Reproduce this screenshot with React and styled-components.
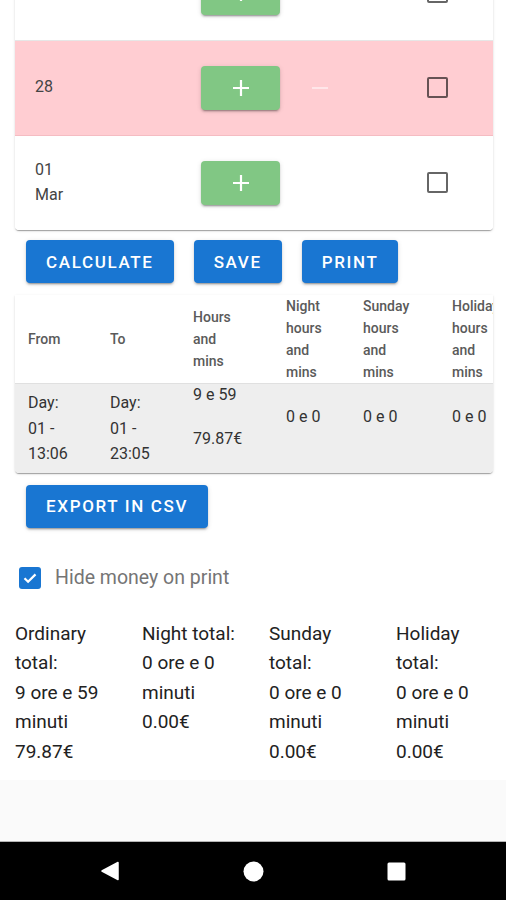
import React from "react";
import styled, { createGlobalStyle } from "styled-components";

const Global = createGlobalStyle`
  html, body { margin: 0; padding: 0; background: #fff; }
  body { font-family: Roboto, "Noto Sans", "Liberation Sans", sans-serif; color: #212121; }
  * { box-sizing: border-box; }
`;

const Screen = styled.div`
  width: 506px;
  height: 900px;
  display: flex;
  flex-direction: column;
  overflow: hidden;
`;

const Viewport = styled.div`
  flex: 1;
  display: flex;
  flex-direction: column;
  overflow: hidden;
`;

const Scrolled = styled.div`
  margin-top: -54px;
  display: flex;
  flex-direction: column;
`;

const Card = styled.div`
  margin: 0 13px 0 15px;
  background: #fff;
  border-radius: 0 0 4px 4px;
  box-shadow: 0 2px 1px -1px rgba(0,0,0,0.2), 0 1px 1px 0 rgba(0,0,0,0.14), 0 1px 3px 0 rgba(0,0,0,0.12);
  overflow: hidden;
`;

const DayRow = styled.div`
  height: ${p => (p.$last ? 94 : 95)}px;
  display: grid;
  grid-template-columns: 166px 79px 1fr 21px;
  align-items: center;
  padding: 0 45px 0 20px;
  background: ${p => (p.$holiday ? "#ffcdd2" : "#fff")};
  border-bottom: ${p => (p.$last ? "none" : p.$holiday ? "1px solid #f5bcc2" : "1px solid #e6e6e6")};
`;

const DayLabel = styled.div`
  font-size: 16px;
  line-height: 25px;
  color: #444;
  margin-top: -3px;
`;

const AddButton = styled.div`
  width: 79px;
  height: 44px;
  border-radius: 4px;
  background: #81c784;
  display: flex;
  align-items: center;
  justify-content: center;
  box-shadow: 0 3px 1px -2px rgba(0,0,0,0.2), 0 2px 2px 0 rgba(0,0,0,0.14), 0 1px 5px 0 rgba(0,0,0,0.12);
`;

const MinusCell = styled.div`
  padding-left: 32px;
  display: flex;
  align-items: center;
`;

const Minus = styled.span`
  display: block;
  width: 16px;
  height: 2px;
  background: rgba(255,255,255,0.5);
`;

const Box = styled.div`
  width: 21px;
  height: 21px;
  margin-top: -2px;
  border-radius: 2px;
  border: 2px solid rgba(0,0,0,0.6);
`;

const ButtonRow = styled.div`
  display: flex;
  gap: 20px;
  padding-left: 26px;
  margin-top: ${p => p.$top}px;
`;

const BlueButton = styled.div`
  height: 43px;
  padding: 0 20px;
  display: flex;
  align-items: center;
  background: #1976d2;
  color: #fff;
  border-radius: 4px;
  font-size: 17px;
  font-weight: 500;
  letter-spacing: 1.65px;
  text-transform: uppercase;
  box-shadow: 0 3px 1px -2px rgba(0,0,0,0.2), 0 2px 2px 0 rgba(0,0,0,0.14), 0 1px 5px 0 rgba(0,0,0,0.12);
`;

const TableWrap = styled.div`
  margin: 12px 13px 0 15px;
  overflow: hidden;
  border-radius: 0 0 4px 4px;
  box-shadow: 0 2px 1px -1px rgba(0,0,0,0.2), 0 1px 1px 0 rgba(0,0,0,0.14), 0 1px 3px 0 rgba(0,0,0,0.12);
`;

const Table = styled.table`
  border-collapse: collapse;
  table-layout: fixed;
  width: 530px;
`;

const Th = styled.th`
  width: ${p => p.$w}px;
  height: 88px;
  padding: 0 0 0 13px;
  text-align: left;
  vertical-align: middle;
  font-size: 14px;
  font-weight: 500;
  line-height: 22px;
  color: #5a5a5a;
  background: #fff;
  border-bottom: 1px solid #e0e0e0;
`;

const Td = styled.td`
  height: 89px;
  padding: 0 0 0 13px;
  vertical-align: middle;
  font-size: 16px;
  line-height: ${p => p.$lh || 22}px;
  color: #333;
  background: #eeeeee;
  white-space: nowrap;
`;

const Line = styled.div`
  min-height: 22px;
`;

const CheckRow = styled.label`
  display: flex;
  align-items: center;
  gap: 14px;
  margin-top: 30px;
  padding-left: 19px;
  height: 40px;
  font-size: 19.5px;
  color: #757575;
`;

const CheckedBox = styled.span`
  width: 22px;
  height: 22px;
  border-radius: 3px;
  background: #1976d2;
  display: flex;
  align-items: center;
  justify-content: center;
`;

const Totals = styled.div`
  display: grid;
  grid-template-columns: repeat(4, 127px);
  padding-left: 15px;
  margin-top: 21px;
  font-size: 19px;
  line-height: 29.5px;
  color: #222;
`;

const Spacer = styled.div`
  flex: 1;
`;

const GreyBand = styled.div`
  height: 62px;
  background: #fafafa;
  border-bottom: 1px solid #b5b5b5;
`;

const NavBar = styled.div`
  height: 58px;
  background: #000;
  display: flex;
  align-items: center;
  justify-content: center;
`;

const NavSlot = styled.div`
  width: 143px;
  display: flex;
  justify-content: center;
`;

const Plus = () => (
  <svg width="20" height="20" viewBox="0 0 20 20">
    <path d="M10 2v16M2 10h16" stroke="#fff" strokeWidth="2.2" />
  </svg>
);

const rows = [
  { label: "", holiday: false },
  { label: "28", holiday: true },
  { label: ["01", "Mar"], holiday: false, last: true },
];

export default function App() {
  return (
    <>
      <Global />
      <Screen>
        <Viewport>
          <Scrolled>
            <Card>
              {rows.map((r, i) => (
                <DayRow key={i} $holiday={r.holiday} $last={r.last}>
                  <DayLabel>
                    {Array.isArray(r.label) ? r.label.map(l => <div key={l}>{l}</div>) : r.label}
                  </DayLabel>
                  <AddButton><Plus /></AddButton>
                  <MinusCell>{r.holiday && <Minus />}</MinusCell>
                  <Box />
                </DayRow>
              ))}
            </Card>
            <ButtonRow $top={10}>
              <BlueButton>Calculate</BlueButton>
              <BlueButton>Save</BlueButton>
              <BlueButton>Print</BlueButton>
            </ButtonRow>
            <TableWrap>
              <Table>
                <thead>
                  <tr>
                    <Th $w={82}>From</Th>
                    <Th $w={83}>To</Th>
                    <Th $w={93}>Hours<br />and<br />mins</Th>
                    <Th $w={77}>Night<br />hours<br />and<br />mins</Th>
                    <Th $w={89}>Sunday<br />hours<br />and<br />mins</Th>
                    <Th $w={106}>Holiday<br />hours<br />and<br />mins</Th>
                  </tr>
                </thead>
                <tbody>
                  <tr>
                    <Td $lh={25.5}>Day:<br />01 -<br />13:06</Td>
                    <Td $lh={25.5}>Day:<br />01 -<br />23:05</Td>
                    <Td>
                      <Line>9 e 59</Line><Line /><Line>79.87€</Line><Line />
                    </Td>
                    <Td><Line>0 e 0</Line><Line /></Td>
                    <Td><Line>0 e 0</Line><Line /></Td>
                    <Td><Line>0 e 0</Line><Line /></Td>
                  </tr>
                </tbody>
              </Table>
            </TableWrap>
            <ButtonRow $top={12}>
              <BlueButton>Export in CSV</BlueButton>
            </ButtonRow>
            <CheckRow>
              <CheckedBox>
                <svg width="16" height="16" viewBox="0 0 16 16">
                  <path d="M2.5 8.2l3.6 3.6L13.5 4.4" fill="none" stroke="#fff" strokeWidth="2.2" />
                </svg>
              </CheckedBox>
              Hide money on print
            </CheckRow>
            <Totals>
              <div>Ordinary<br />total:<br />9 ore e 59<br />minuti<br />79.87€</div>
              <div>Night total:<br />0 ore e 0<br />minuti<br />0.00€</div>
              <div>Sunday<br />total:<br />0 ore e 0<br />minuti<br />0.00€</div>
              <div>Holiday<br />total:<br />0 ore e 0<br />minuti<br />0.00€</div>
            </Totals>
          </Scrolled>
          <Spacer />
          <GreyBand />
        </Viewport>
        <NavBar>
          <NavSlot>
            <svg width="20" height="20" viewBox="0 0 20 20">
              <path d="M18 1.5v17L2 10z" fill="#fff" stroke="#fff" strokeWidth="1.5" strokeLinejoin="round" />
            </svg>
          </NavSlot>
          <NavSlot>
            <svg width="21" height="21" viewBox="0 0 21 21"><circle cx="10.5" cy="10.5" r="10" fill="#fff" /></svg>
          </NavSlot>
          <NavSlot>
            <svg width="19" height="19" viewBox="0 0 19 19"><rect x="0.5" y="0.5" width="18" height="18" rx="1.5" fill="#fff" /></svg>
          </NavSlot>
        </NavBar>
      </Screen>
    </>
  );
}
